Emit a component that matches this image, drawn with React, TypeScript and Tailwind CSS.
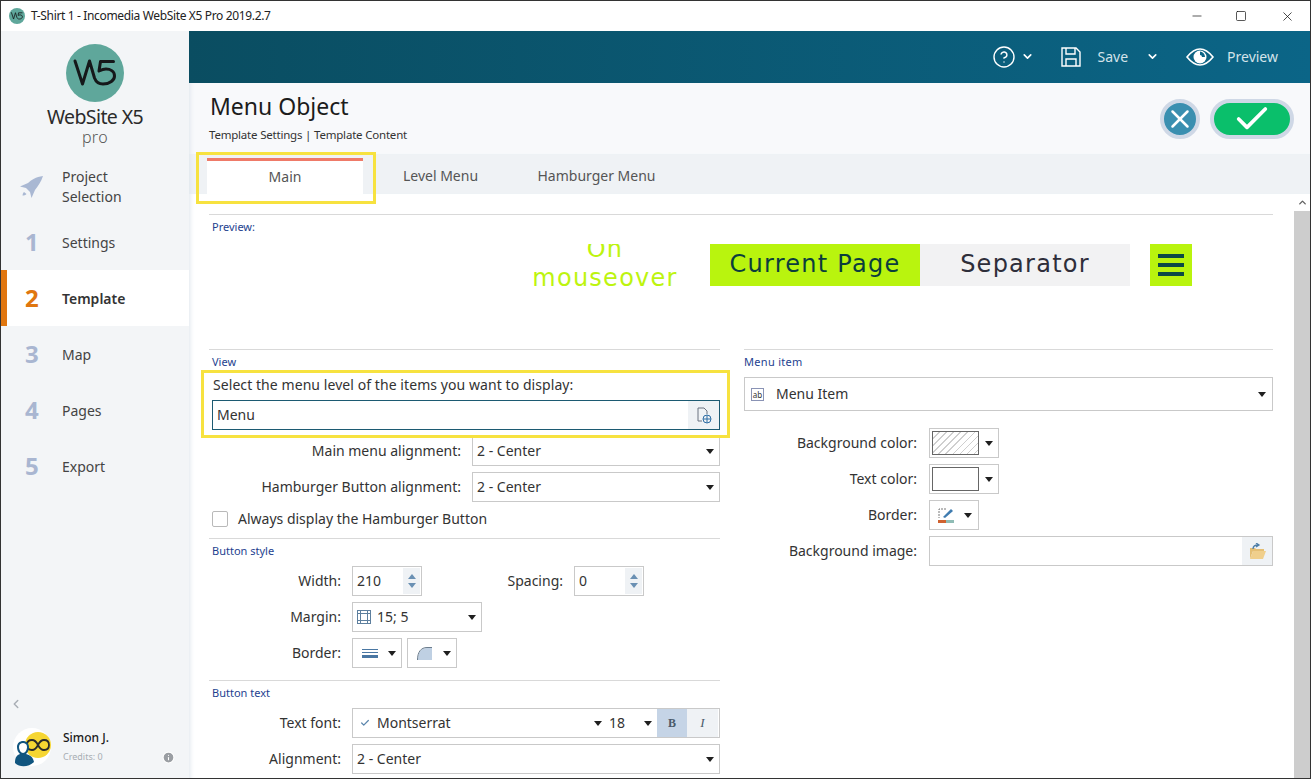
import { ChevronDown, ChevronLeft, ChevronUp, Check, X, Minus, Square, Info, CircleHelp } from "lucide-react";
import type { ReactNode } from "react";

const Caret = () => (
    <svg width="8" height="5" viewBox="0 0 8 5" className="shrink-0">
        <path d="M0 0h8L4 5z" fill="#1f1f1f" />
    </svg>
);

const W5Mark = ({ size, stroke }: { size: number; stroke: string }) => (
    <svg width={size} height={size} viewBox="0 0 58 58">
        <circle cx="29" cy="29" r="29" fill="#5fa79b" />
        <path d="M9 17L16.5 40 23.5 17 28.5 34C30 38 33 40 37 40 44 40 48.5 36 48.5 32 48.5 27 44 25 40 25 37 25 35 26 33 27L34.5 17.5H47.5" fill="none" stroke={stroke} strokeWidth="3" strokeLinejoin="round" strokeLinecap="round" />
    </svg>
);

const NavItem = ({ num, label, active }: { num: string; label: string; active?: boolean }) => (
    <div className={`flex items-center h-[56px] ${active ? "bg-white border-l-[6px] border-[#e0760f] pl-[18px]" : "pl-[24px]"}`}>
        <span className={`w-[37px] text-[24px] font-bold leading-none ${active ? "text-[#e0760f]" : "text-[#a9b6d1]"}`}>{num}</span>
        <span className={`text-[14px] ${active ? "font-semibold text-[#333]" : "text-[#444]"}`}>{label}</span>
    </div>
);

const Sidebar = () => (
    <aside className="w-[188px] shrink-0 bg-[#f3f5f7] flex flex-col">
        <div className="flex flex-col items-center pt-[13px] h-[126px]">
            <W5Mark size={58} stroke="#15181a" />
            <div className="text-[19.5px] leading-[20px] mt-[5px] text-[#2b2b2b] tracking-[-0.6px]">WebSite X5</div>
            <div className="text-[16px] leading-[16px] mt-[2px] font-light tracking-[0.4px] text-[#555]">pro</div>
        </div>
        <div className="flex items-center h-[57px] pl-[18px] pt-[2px]">
            <svg width="25" height="24" viewBox="0 0 25 24" className="mr-[18px] shrink-0" fill="#a9b8d3">
                <path d="M24 1C17 2 12 5 9 8L1 11.5l6 1.5 4 4 1.5 6 3.5-8C19 11 22 7 24 1z" />
                <path d="M5 17c-1 1-1.5 2.5-1.5 3.5C5 20.5 6.5 20 7.5 19z" />
            </svg>
            <span className="text-[14px] leading-[20px] text-[#444]">
                Project
                <br />
                Selection
            </span>
        </div>
        <NavItem num="1" label="Settings" />
        <NavItem num="2" label="Template" active />
        <NavItem num="3" label="Map" />
        <NavItem num="4" label="Pages" />
        <NavItem num="5" label="Export" />
        <div className="flex-1 flex flex-col justify-end pb-[11px]">
            <ChevronLeft className="ml-[8px] mb-[16px] text-[#a9aeb5]" size={14} strokeWidth={2.5} />
            <div className="flex items-center pl-[12px]">
                <svg width="40" height="40" viewBox="0 0 40 40">
                    <circle cx="19" cy="20" r="19" fill="#fff" />
                    <circle cx="25" cy="18" r="13" fill="#f6d632" />
                    <path d="M25 18c-2-4-4-5-6-5-3 0-5 2-5 5s2 5 5 5c2 0 4-1 6-5s4-5 6-5c3 0 5 2 5 5s-2 5-5 5c-2 0-4-1-6-5z" fill="none" stroke="#2a2a2a" strokeWidth="1.8" />
                    <path d="M2 36c0-6 2-8 5-9-2-2-3-4-3-7 0-4 3-6 6-6s6 2 6 6c0 3-1 5-3 7 4 1 7 3 8 8-5 5-14 6-19 1z" fill="#10557f" />
                    <path d="M6 20c0-3 2-4 4-4s4 1 4 4-2 6-4 6-4-3-4-6z" fill="#fff" />
                </svg>
                <div className="ml-[10px] flex-1">
                    <div className="text-[12px] leading-[16px] font-medium text-[#1a1a1a]">Simon J.</div>
                    <div className="flex items-center justify-between mt-[4px] pr-[14px]">
                        <span className="text-[9px] leading-[14px] text-[#a8adb3]">Credits: 0</span>
                        <Info size={13} className="text-white fill-[#9a9ea3]" />
                    </div>
                </div>
            </div>
        </div>
    </aside>
);

const Label = ({ children }: { children: ReactNode }) => <span className="text-[14px] text-[#333] whitespace-nowrap">{children}</span>;

const Row = ({ label, width, children, className = "" }: { label: string; width: string; children: ReactNode; className?: string }) => (
    <div className={`flex items-center h-[30px] ${className}`}>
        <div className={`${width} mb-[2px] text-right shrink-0`}>
            <Label>{label}</Label>
        </div>
        {children}
    </div>
);

const Select = ({ children, className = "" }: { children: ReactNode; className?: string }) => (
    <div className={`h-[30px] border border-[#c9c9c9] bg-white flex items-center pl-[4px] pr-[5px] text-[14px] text-[#333] ${className}`}>
        <div className="flex-1 flex items-center min-w-0 pb-[2px]">{children}</div>
        <Caret />
    </div>
);

const Spinner = ({ value, className = "" }: { value: string; className?: string }) => (
    <div className={`w-[70px] h-[30px] border border-[#c9c9c9] flex items-center pl-[4px] text-[14px] text-[#333] ${className}`}>
        <span className="flex-1 pb-[2px]">{value}</span>
        <div className="w-[17px] h-[26px] mr-[1px] bg-[#eff2f5] flex flex-col items-center justify-center">
            <svg width="8" height="5" viewBox="0 0 8 5" className="mb-[4px]"><path d="M4 0l4 5H0z" fill="#6a90b3" /></svg>
            <svg width="8" height="5" viewBox="0 0 8 5"><path d="M0 0h8L4 5z" fill="#6a90b3" /></svg>
        </div>
    </div>
);

const SectionTitle = ({ children, className }: { children: ReactNode; className: string }) => (
    <div className={`border-t border-[#d9d9d9] text-[11px] text-[#1e3f8f] ${className}`}>{children}</div>
);

const Panel = () => (
    <div className="flex-1 min-w-0 pl-[20px] pr-[21px] pt-[20px] overflow-hidden bg-white shadow-[inset_5px_0_5px_-4px_#dfe6ec]">
        <SectionTitle className="h-[30px] leading-[24px] pl-[3px]">Preview:</SectionTitle>
        <div className="flex h-[42px] pl-[291px] tracking-[1.25px]" style={{ fontFamily: "'DejaVu Sans', sans-serif" }}>
            <div className="w-[210px] h-[42px] overflow-hidden flex items-center justify-center text-center text-[24px] leading-[29px] text-[#bdf40f]">
                <span className="shrink-0 mt-[-2px]">
                    On
                    <br />
                    mouseover
                </span>
            </div>
            <div className="w-[210px] bg-[#b9f40e] flex items-center justify-center pb-[2px] text-[#0b3d3d] text-[24px]">Current Page</div>
            <div className="w-[210px] bg-[#f2f2f3] flex items-center justify-center pb-[2px] text-[#2e2e3a] text-[24px]">Separator</div>
            <div className="w-[42px] ml-[20px] bg-[#b9f40e] flex flex-col items-center justify-center gap-[5px]">
                <div className="w-[26px] h-[4px] bg-[#0b4a45]" />
                <div className="w-[26px] h-[4px] bg-[#0b4a45]" />
                <div className="w-[26px] h-[4px] bg-[#0b4a45]" />
            </div>
        </div>
        <div className="h-[63px]" />
        <div className="flex gap-[24px]">
            <div className="w-[511px] shrink-0">
                <SectionTitle className="h-[21px] leading-[24px] pl-[3px]">View</SectionTitle>
                <div className="relative">
                    <div className="absolute left-[-8px] right-[-10px] top-0 h-[68px] border-[3px] border-[#f7e23f] pointer-events-none" />
                    <div className="h-[30px] flex items-center pl-[4px] pb-[2px] tracking-[0.07px]">
                        <Label>Select the menu level of the items you want to display:</Label>
                    </div>
                    <div className="ml-[3px] h-[30px] border border-[#1c5a72] flex items-center pl-[4px] text-[14px] text-[#333]">
                        <span className="flex-1 pb-[2px]">Menu</span>
                        <div className="w-[31px] h-[28px] bg-[#eff2f5] flex items-center justify-center">
                            <svg width="16" height="17" viewBox="0 0 16 17" fill="none">
                                <path d="M6 14H2V1h6l3 3v3" stroke="#6b7280" />
                                <circle cx="11" cy="12" r="4" stroke="#2f6ea5" />
                                <path d="M7 12h8M11 8v8" stroke="#2f6ea5" />
                            </svg>
                        </div>
                    </div>
                </div>
                <Row label="Main menu alignment:" width="w-[252px]" className="mt-[6px]">
                    <Select className="ml-[11px] flex-1">2 - Center</Select>
                </Row>
                <Row label="Hamburger Button alignment:" width="w-[252px]" className="mt-[6px]">
                    <Select className="ml-[11px] flex-1">2 - Center</Select>
                </Row>
                <div className="flex items-center mt-[9px] ml-[3px] h-[16px]">
                    <div className="w-[16px] h-[16px] border border-[#b9b9b9] rounded-[2px]" />
                    <span className="ml-[10px] mb-[2px]"><Label>Always display the Hamburger Button</Label></span>
                </div>
                <div className="h-[11px]" />
                <SectionTitle className="h-[28px] leading-[24px] pl-[3px]">Button style</SectionTitle>
                <Row label="Width:" width="w-[132px]">
                    <Spinner value="210" className="ml-[11px]" />
                    <div className="w-[141px] mb-[2px] text-right"><Label>Spacing:</Label></div>
                    <Spinner value="0" className="ml-[11px]" />
                </Row>
                <Row label="Margin:" width="w-[132px]" className="mt-[6px]">
                    <Select className="ml-[11px] w-[130px]">
                        <svg width="14" height="14" viewBox="0 0 14 14" fill="none" stroke="#5d7f9e" className="mr-[6px] mt-[2px]">
                            <rect x="0.5" y="0.5" width="13" height="13" />
                            <path d="M3.5 0v14M10.5 0v14M0 3.5h14M0 10.5h14" />
                        </svg>
                        15; 5
                    </Select>
                </Row>
                <Row label="Border:" width="w-[132px]" className="mt-[6px]">
                    <Select className="ml-[11px] w-[50px] pl-[9px]">
                        <div className="flex flex-col gap-[2px] mt-[2px]">
                            <div className="w-[16px] h-[1px] bg-[#4a77a3]" />
                            <div className="w-[16px] h-[1px] bg-[#4a77a3]" />
                            <div className="w-[16px] h-[3px] bg-[#4a77a3]" />
                        </div>
                    </Select>
                    <Select className="ml-[5px] w-[50px] pl-[9px]">
                        <svg width="15" height="13" viewBox="0 0 15 13" className="mt-[2px]">
                            <path d="M1 13C1 5 4 1 10 1h5v12z" fill="#bfd0e3" />
                            <path d="M.5 13C.5 5 4 .5 10 .5h5" fill="none" stroke="#6b7c8c" />
                        </svg>
                    </Select>
                </Row>
                <div className="h-[12px]" />
                <SectionTitle className="h-[28px] leading-[24px] pl-[3px]">Button text</SectionTitle>
                <Row label="Text font:" width="w-[132px]">
                    <div className="ml-[11px] flex-1 h-[30px] border border-[#c9c9c9] flex items-center pl-[7px] text-[14px] text-[#333]">
                        <Check size={10} strokeWidth={3} className="text-[#5b86ad] mr-[7px]" />
                        <span className="flex-1 pb-[2px]">Montserrat</span>
                        <Caret />
                        <span className="ml-[7px] w-[35px] pb-[2px]">18</span>
                        <Caret />
                        <div className="ml-[5px] w-[30px] h-[28px] bg-[#c5d4e6] flex items-center justify-center text-[12px] font-bold text-[#4a5a6a]" style={{ fontFamily: "'Liberation Serif', serif" }}>B</div>
                        <div className="mr-[1px] w-[31px] h-[28px] bg-[#eff2f5] flex items-center justify-center text-[13px] italic text-[#4a5a6a]" style={{ fontFamily: "'Liberation Serif', serif" }}>I</div>
                    </div>
                </Row>
                <Row label="Alignment:" width="w-[132px]" className="mt-[6px]">
                    <Select className="ml-[11px] flex-1">2 - Center</Select>
                </Row>
            </div>
            <div className="w-[529px] shrink-0">
                <SectionTitle className="h-[28px] leading-[24px] tracking-[0.3px]">Menu item</SectionTitle>
                <div className="h-[34px] border border-[#c9c9c9] flex items-center pl-[6px] pr-[6px] text-[14px] text-[#333]">
                    <div className="w-[13px] h-[13px] border border-[#8a93b5] text-[8px] leading-[11px] text-center mr-[12px]">ab</div>
                    <span className="flex-1 pb-[2px]">Menu Item</span>
                    <Caret />
                </div>
                <div className="h-[17px]" />
                <Row label="Background color:" width="w-[173px]">
                    <div className="ml-[12px] w-[70px] h-[30px] border border-[#c9c9c9] flex items-center pl-[2px] gap-[6px]">
                        <div className="w-[47px] h-[24px] border border-[#666] bg-[repeating-linear-gradient(135deg,#fff_0,#fff_4px,#cfcfcf_4px,#cfcfcf_5px)]" />
                        <Caret />
                    </div>
                </Row>
                <Row label="Text color:" width="w-[173px]" className="mt-[6px]">
                    <div className="ml-[12px] w-[70px] h-[30px] border border-[#c9c9c9] flex items-center pl-[2px] gap-[6px]">
                        <div className="w-[47px] h-[24px] border border-[#666] bg-white" />
                        <Caret />
                    </div>
                </Row>
                <Row label="Border:" width="w-[173px]" className="mt-[6px]">
                    <div className="ml-[12px] w-[50px] h-[30px] border border-[#c9c9c9] flex items-center pl-[8px] gap-[9px]">
                        <svg width="17" height="17" viewBox="0 0 17 17" fill="none">
                            <path d="M8 2H1v9" stroke="#777" strokeDasharray="2 1" />
                            <path d="M5 10l8-8 2 2-8 7z" fill="#3f7cb0" />
                            <rect x="0" y="13" width="8" height="3" fill="#d0622f" />
                            <rect x="8" y="13" width="8" height="3" fill="#8fbcb5" />
                        </svg>
                        <Caret />
                    </div>
                </Row>
                <Row label="Background image:" width="w-[173px]" className="mt-[6px]">
                    <div className="ml-[12px] flex-1 h-[30px] border border-[#c9c9c9] flex items-center justify-end">
                        <div className="w-[30px] h-[28px] bg-[#eff2f5] flex items-center justify-center">
                            <svg width="17" height="16" viewBox="0 0 17 16">
                                <path d="M1 5h5l1 1h8v2H4l-3 8z" fill="#e5bf74" />
                                <path d="M4 8h13l-3 8H1z" fill="#f0cf8c" />
                                <path d="M4 6c0-3 2-4 5-4M7 0l3 2-3 2" fill="none" stroke="#4d7ea8" strokeWidth="1.3" />
                            </svg>
                        </div>
                    </div>
                </Row>
            </div>
        </div>
    </div>
);

export default function App() {
    return (
        <div className="w-[1311px] h-[779px] flex flex-col overflow-hidden bg-white border border-[#333]" style={{ fontFamily: "'Noto Sans', sans-serif" }}>
            <div className="h-[30px] shrink-0 flex items-center bg-white pl-[8px]">
                <W5Mark size={16} stroke="#15181a" />
                <span className="ml-[6px] text-[12px] tracking-[-0.35px] text-[#222]">T-Shirt 1 - Incomedia WebSite X5 Pro 2019.2.7</span>
                <div className="flex-1" />
                <Minus size={14} strokeWidth={1.2} className="mr-[31px] text-[#111]" />
                <Square size={12} strokeWidth={1.4} className="mr-[33px] text-[#111]" />
                <X size={15} strokeWidth={1.2} className="mr-[15px] text-[#111]" />
            </div>
            <div className="flex-1 flex min-h-0">
                <Sidebar />
                <main className="flex-1 min-w-0 flex flex-col">
                    <header className="h-[52px] shrink-0 bg-gradient-to-r from-[#0a4d61] to-[#0b6587] flex items-center justify-end text-[#d3e3ea] text-[14px] pr-[32px] pb-[1px]">
                        <CircleHelp size={24} strokeWidth={1.4} className="text-white" />
                        <ChevronDown size={13} strokeWidth={3} className="ml-[5px] text-white" />
                        <svg width="20" height="20" viewBox="0 0 20 20" fill="none" stroke="#fff" strokeWidth="1.4" className="ml-[27px]">
                            <path d="M1 1h14l4 4v14H1z" />
                            <path d="M5 1v6h9V1M5 19v-7h10v7" />
                        </svg>
                        <span className="ml-[17px]">Save</span>
                        <ChevronDown size={13} strokeWidth={3} className="ml-[18px] text-white" />
                        <svg width="28" height="18" viewBox="0 0 28 18" className="ml-[27px]">
                            <path d="M1 9c4-5 8-8 13-8s9 3 13 8c-4 5-8 8-13 8S5 14 1 9z" fill="none" stroke="#fff" strokeWidth="1.6" />
                            <circle cx="14" cy="9" r="6.5" fill="#fff" />
                            <path d="M14 3.5a5.5 5.5 0 0 1 5 5.5h-3a2 2 0 0 0-2-2z" fill="#0b6587" />
                        </svg>
                        <span className="ml-[13px]">Preview</span>
                    </header>
                    <div className="h-[71px] shrink-0 bg-[#f8f9fb] flex items-center justify-between pl-[21px] pr-[16px] shadow-[inset_5px_0_5px_-4px_#dfe6ec]">
                        <div className="mt-[-4px]">
                            <h1 className="text-[23px] leading-[30px] text-[#1c1c1c]">Menu Object</h1>
                            <p className="text-[11.5px] leading-[16px] mt-[6px] -ml-[1px] tracking-[-0.2px] text-[#333]">Template Settings | Template Content</p>
                        </div>
                        <div className="flex items-center gap-[10px]">
                            <div className="w-[40px] h-[40px] rounded-full border-[4px] border-[#cfd8e6] bg-[#3a8fb0] flex items-center justify-center">
                                <X size={30} strokeWidth={2} className="text-white shrink-0" />
                            </div>
                            <div className="w-[84px] h-[40px] rounded-full border-[4px] border-[#cfd8e6] bg-[#0abf6b] flex items-center justify-center">
                                <Check size={40} strokeWidth={2.2} className="text-white shrink-0" />
                            </div>
                        </div>
                    </div>
                    <div className="h-[40px] shrink-0 bg-[#eff2f5] flex text-[14px] text-[#555] pl-[18px] shadow-[inset_5px_0_5px_-4px_#dfe6ec]">
                        <div className="relative w-[156px] mt-[4px] pb-[3px] bg-white border-t-[3px] border-[#ef7a68] flex items-center justify-center">
                            <div className="absolute left-[-11px] top-[-9px] w-[180px] h-[52px] border-[3px] border-[#f7e23f]" />
                            Main
                        </div>
                        <div className="w-[155px] pt-[2px] flex items-center justify-center">Level Menu</div>
                        <div className="w-[157px] pt-[2px] flex items-center justify-center">Hamburger Menu</div>
                    </div>
                    <div className="flex-1 flex min-h-0">
                        <Panel />
                        <div className="w-[16px] shrink-0 bg-[#f0f0f0] flex flex-col">
                            <div className="h-[17px] bg-white flex items-center justify-center">
                                <ChevronUp size={11} strokeWidth={3} className="text-[#606060]" />
                            </div>
                            <div className="flex-1 bg-[#cdcdcd]" />
                        </div>
                    </div>
                </main>
            </div>
        </div>
    );
}
